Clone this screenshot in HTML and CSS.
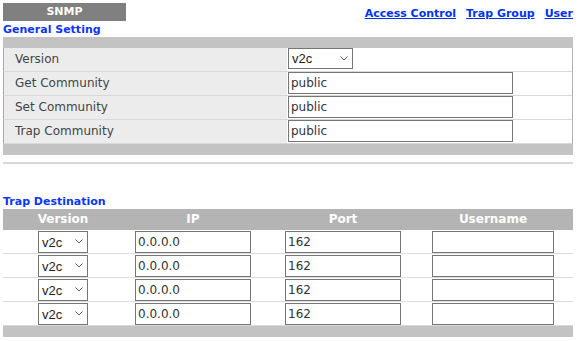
FILE: index.html
```html
<!DOCTYPE html>
<html lang="en">
<head>
    <meta charset="UTF-8">
    <title>SNMP</title>
    <link rel="stylesheet" href="styles.css">
</head>
<body>
    <div class="page">
        <div class="top-bar">
            <div class="tab">SNMP</div>
            <div class="links">
                <a href="#" class="link">Access Control</a>
                <a href="#" class="link">Trap Group</a>
                <a href="#" class="link">User</a>
            </div>
        </div>

        <div class="section-title">General Setting</div>
        <div class="panel">
            <div class="bar"></div>
            <div class="row">
                <div class="label">Version</div>
                <div class="value">
                    <span class="select-wrap">
                        <select class="select select-wide">
                            <option>v2c</option>
                            <option>v3</option>
                        </select>
                        <svg class="chevron" width="8" height="5" viewBox="0 0 8 5"><path d="M0.5 0.5 L4 4 L7.5 0.5" fill="none" stroke="#555" stroke-width="1"/></svg>
                    </span>
                </div>
            </div>
            <div class="row">
                <div class="label">Get Community</div>
                <div class="value"><input type="text" class="field" value="public"></div>
            </div>
            <div class="row">
                <div class="label">Set Community</div>
                <div class="value"><input type="text" class="field" value="public"></div>
            </div>
            <div class="row">
                <div class="label">Trap Community</div>
                <div class="value"><input type="text" class="field" value="public"></div>
            </div>
            <div class="bar"></div>
        </div>

        <div class="divider"></div>

        <div class="section-title trap-title">Trap Destination</div>
        <div class="trap-table">
            <div class="trap-head">
                <div>Version</div>
                <div>IP</div>
                <div>Port</div>
                <div>Username</div>
            </div>
            <div class="trap-row">
                <div>
                    <span class="select-wrap">
                        <select class="select"><option>v2c</option><option>v3</option></select>
                        <svg class="chevron" width="8" height="5" viewBox="0 0 8 5"><path d="M0.5 0.5 L4 4 L7.5 0.5" fill="none" stroke="#555" stroke-width="1"/></svg>
                    </span>
                </div>
                <div><input type="text" class="field field-ip" value="0.0.0.0"></div>
                <div><input type="text" class="field field-port" value="162"></div>
                <div><input type="text" class="field field-user" value=""></div>
            </div>
            <div class="trap-row">
                <div>
                    <span class="select-wrap">
                        <select class="select"><option>v2c</option><option>v3</option></select>
                        <svg class="chevron" width="8" height="5" viewBox="0 0 8 5"><path d="M0.5 0.5 L4 4 L7.5 0.5" fill="none" stroke="#555" stroke-width="1"/></svg>
                    </span>
                </div>
                <div><input type="text" class="field field-ip" value="0.0.0.0"></div>
                <div><input type="text" class="field field-port" value="162"></div>
                <div><input type="text" class="field field-user" value=""></div>
            </div>
            <div class="trap-row">
                <div>
                    <span class="select-wrap">
                        <select class="select"><option>v2c</option><option>v3</option></select>
                        <svg class="chevron" width="8" height="5" viewBox="0 0 8 5"><path d="M0.5 0.5 L4 4 L7.5 0.5" fill="none" stroke="#555" stroke-width="1"/></svg>
                    </span>
                </div>
                <div><input type="text" class="field field-ip" value="0.0.0.0"></div>
                <div><input type="text" class="field field-port" value="162"></div>
                <div><input type="text" class="field field-user" value=""></div>
            </div>
            <div class="trap-row">
                <div>
                    <span class="select-wrap">
                        <select class="select"><option>v2c</option><option>v3</option></select>
                        <svg class="chevron" width="8" height="5" viewBox="0 0 8 5"><path d="M0.5 0.5 L4 4 L7.5 0.5" fill="none" stroke="#555" stroke-width="1"/></svg>
                    </span>
                </div>
                <div><input type="text" class="field field-ip" value="0.0.0.0"></div>
                <div><input type="text" class="field field-port" value="162"></div>
                <div><input type="text" class="field field-user" value=""></div>
            </div>
            <div class="bar"></div>
        </div>
    </div>
</body>
</html>
```

FILE: styles.css
```css
* {
    margin: 0;
    padding: 0;
    box-sizing: border-box;
}

body {
    font-family: 'DejaVu Sans', Verdana, sans-serif;
    font-size: 12px;
    color: #444;
    background: white;
}

.page {
    width: 570px;
    margin-left: 3px;
    padding-top: 3px;
}

.top-bar {
    display: flex;
    justify-content: space-between;
    height: 18px;
}

.tab {
    width: 123px;
    height: 18px;
    background: #808080;
    color: white;
    font-weight: bold;
    font-size: 11px;
    text-align: center;
    line-height: 18px;
}

.links {
    display: flex;
    gap: 10px;
    padding-top: 4px;
}

.link {
    color: #0033ee;
    font-weight: bold;
    font-size: 11px;
    text-decoration: underline;
}

.section-title {
    color: #0a36f5;
    font-weight: bold;
    font-size: 11px;
    height: 16px;
    line-height: 17px;
}

.bar {
    height: 11px;
    background: #c3c3c3;
}

.row {
    display: flex;
    height: 24px;
    border-bottom: 1px solid #d9d9d9;
    border-left: 1px solid #a8a8a8;
    border-right: 1px solid #b0b0b0;
}

.label {
    width: 283px;
    background: #ececec;
    padding-left: 11px;
    line-height: 23px;
    font-size: 12px;
}

.value {
    flex: 1;
    padding-left: 1px;
    display: flex;
    align-items: flex-start;
}

.field {
    height: 22px;
    width: 225px;
    border: 1px solid #767676;
    padding: 0 2px;
    font-family: 'DejaVu Sans', Verdana, sans-serif;
    font-size: 12px;
    color: #333;
    background: white;
    outline: none;
}

.select-wrap {
    position: relative;
    display: inline-block;
}

.select {
    display: block;
    height: 22px;
    width: 50px;
    border: 1px solid #767676;
    border-radius: 0;
    background: white;
    appearance: none;
    -webkit-appearance: none;
    font-family: 'Liberation Sans', Arial, sans-serif;
    font-size: 13px;
    color: #222;
    padding-left: 3px;
}

.select-wide {
    width: 65px;
    height: 21px;
}

.chevron {
    position: absolute;
    right: 5px;
    top: 8px;
    pointer-events: none;
}

.divider {
    height: 2px;
    background: #d9d9d9;
    margin-top: 7px;
}

.trap-title {
    margin-top: 30px;
    height: 15px;
    line-height: 15px;
}

.trap-head,
.trap-row {
    display: grid;
    grid-template-columns: 120px 140px 160px 140px;
}

.trap-head {
    height: 21px;
    background: #b4b4b4;
    color: white;
    font-weight: bold;
    font-size: 12px;
    line-height: 21px;
    text-align: center;
}

.trap-row {
    height: 24px;
    border-bottom: 1px solid #d9d9d9;
    padding-top: 1px;
}

.trap-row > div {
    display: flex;
    justify-content: center;
    align-items: flex-start;
}

.field-ip {
    width: 116px;
}

.field-port {
    width: 116px;
}

.field-user {
    width: 122px;
}
```
